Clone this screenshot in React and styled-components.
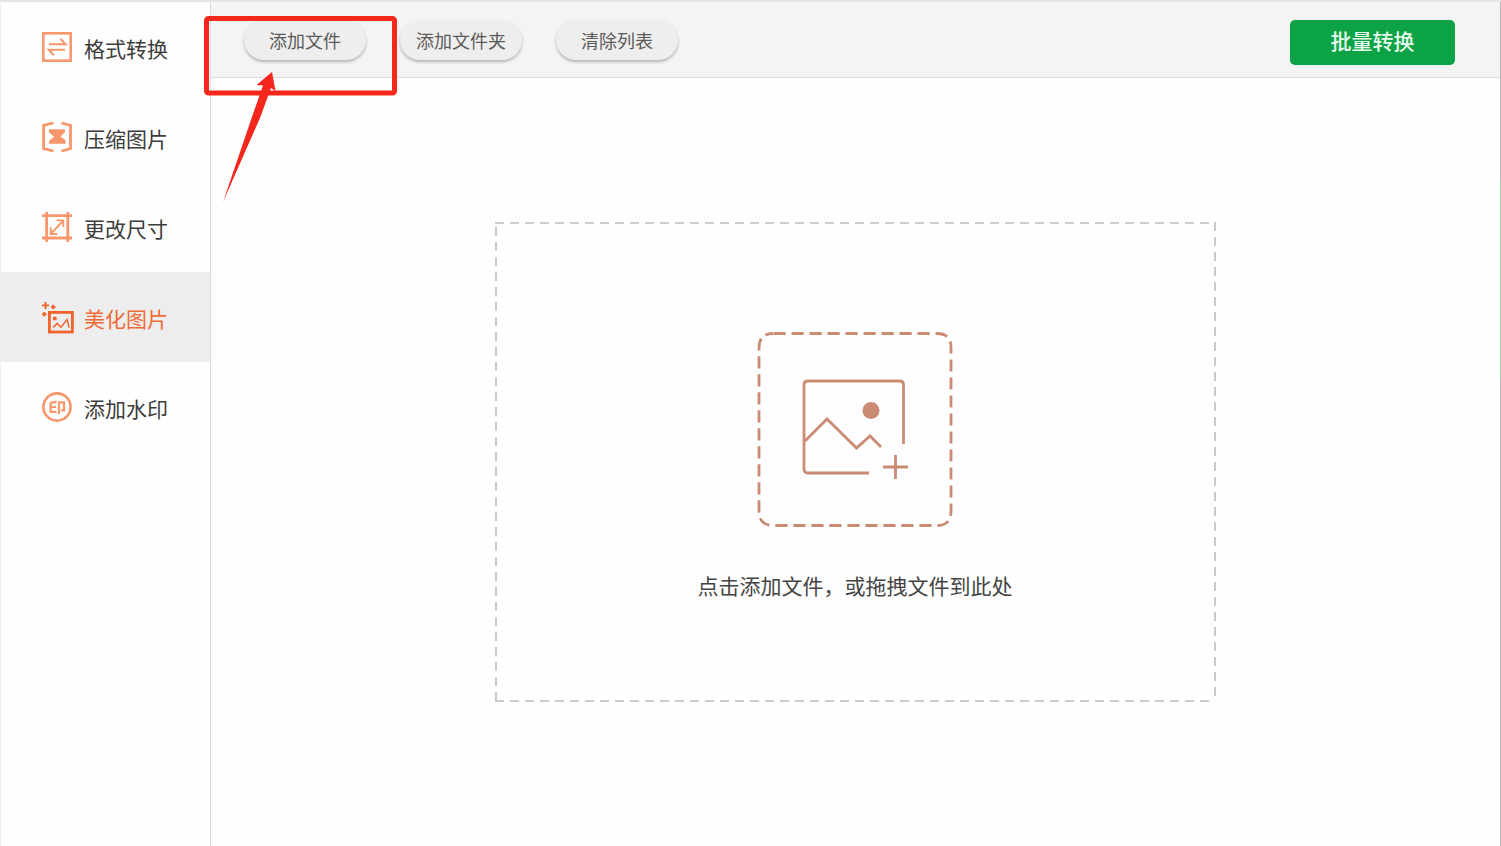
import React from "react";
import styled, { createGlobalStyle } from "styled-components";

const GlobalStyle = createGlobalStyle`
  *, *::before, *::after { box-sizing: border-box; }
  body {
    margin: 0;
    background: #fefefe;
    color: #3c3c3c;
    font-family: "Noto Sans CJK SC", sans-serif;
  }
  button { font-family: inherit; cursor: pointer; }
`;

const Window = styled.div`
  position: relative;
  display: flex;
  min-height: 100vh;
  border-top: 2px solid #e3e4e6;
  border-left: 1px solid #f0f0f2;
`;

const Sidebar = styled.nav`
  flex: 0 0 210px;
  display: flex;
  flex-direction: column;
  border-right: 1px solid #dcdcde;
`;

const NavItem = styled.a`
  display: flex;
  align-items: center;
  gap: 10px;
  height: 90px;
  padding-left: 40px;
  text-decoration: none;
  font-size: 21px;
  line-height: 30px;
  color: ${(p) => (p.$active ? "#f06a35" : "#3c3c3c")};
  background: ${(p) => (p.$active ? "#ededed" : "transparent")};
`;

const NavIcon = styled.svg`
  flex: none;
  width: 33px;
  height: 34px;
  fill: none;
  stroke: ${(p) => (p.$active ? "#f0632c" : "#f7976c")};
  color: ${(p) => (p.$active ? "#f0632c" : "#f7976c")};
`;

const NavLabel = styled.span`
  padding-top: 2px;
`;

const Main = styled.main`
  flex: 1;
  min-width: 0;
  display: flex;
  flex-direction: column;
`;

const Toolbar = styled.header`
  display: flex;
  align-items: flex-start;
  gap: 34px;
  height: 76px;
  padding: 18px 46px 0 33px;
  background: #f4f4f4;
  border-bottom: 1px solid #dcdcdc;
`;

const PillButton = styled.button`
  width: 122px;
  height: 40px;
  padding: 0;
  border: 0;
  border-radius: 20px;
  background: #eeeeee;
  box-shadow: 0 2px 3px rgba(0, 0, 0, 0.26);
  color: #5a5a5a;
  font-size: 18px;
  line-height: 38px;
  white-space: nowrap;
`;

const PrimaryButton = styled.button`
  width: 165px;
  height: 45px;
  margin-left: auto;
  padding: 0 0 6px;
  border: 0;
  border-radius: 5px;
  background: #0ba345;
  color: #e9fbef;
  font-size: 21px;
  font-weight: 500;
  line-height: 30px;
`;

const Workspace = styled.section`
  flex: 1;
  display: flex;
  align-items: center;
  justify-content: center;
  padding: 24px 26px 24px 24px;
`;

const DropZone = styled.button`
  position: relative;
  display: flex;
  flex-direction: column;
  align-items: center;
  justify-content: center;
  gap: 43px;
  width: 720px;
  max-width: 100%;
  height: 480px;
  padding: 6px 0 0;
  border: 0;
  background: transparent;
  color: #444444;
  font-size: 21px;
  line-height: 30px;
`;

const DashedFrame = styled.svg`
  position: absolute;
  inset: 0;
  width: 100%;
  height: 100%;
  overflow: visible;
`;

const PictureIcon = styled.svg`
  width: 196px;
  height: 196px;
`;

const Callout = styled.svg`
  position: absolute;
  top: 12px;
  left: 201px;
  width: 198px;
  height: 192px;
  pointer-events: none;
`;

const WindowEdge = styled.div`
  position: absolute;
  top: 0;
  right: 0;
  bottom: 0;
  width: 1px;
  background: linear-gradient(
    to bottom,
    #b8b8b8 0 178px,
    #a9d3a9 178px 378px,
    #b8b8b8 378px
  );
`;

const icons = {
  convert: (
    <>
      <rect x="2.3" y="3.3" width="27.4" height="27.4" strokeWidth="2.6" />
      <path d="M8 14.2H24.6L19.4 8.800" strokeWidth="2" />
      <path d="M24 19.8H7.600L12.800 25.200" strokeWidth="2" />
    </>
  ),
  compress: (
    <>
      <path
        d="M12.5 3L2.600 5.400V28.600L12.500 31M20.500 3L29.500 5.400V28.600L20.500 31"
        strokeWidth="2.8"
      />
      <path
        d="M8 9.3H24V12.2L19.500 16.500L24.500 20.200V23.800H8V21L13.200 16.500L8 12.500Z"
        fill="currentColor"
        stroke="none"
      />
    </>
  ),
  resize: (
    <>
      <path d="M1 5.6H31M1 28H31" strokeWidth="2.8" />
      <path d="M5.6 2V32M26.8 2V32" strokeWidth="2.8" />
      <path
        d="M10.2 23.4L21.8 11M15.5 10.4H22.3V17M9.7 17.5V24H16.3"
        strokeWidth="1.9"
      />
    </>
  ),
  beautify: (
    <>
      <path d="M1 5.4H8M4.5 2V9M10 7H14.5M12.2 4.7V9.3M1 14.3H5.5M3.3 12V16.6" strokeWidth="1.9" />
      <rect x="8.4" y="12.4" width="23" height="19.6" strokeWidth="2.8" />
      <circle cx="13.8" cy="18.5" r="2" fill="currentColor" stroke="none" />
      <path d="M12.2 27.4L16.3 23.4L20 27.2L26 19.6L28.2 27.6" strokeWidth="1.5" />
    </>
  ),
  watermark: (
    <>
      <circle cx="16" cy="17" r="13.6" strokeWidth="2.6" />
      <path
        d="M15.600 11.600L9.600 12.800V21.800H15.400M9.600 17H15M18 24V12.400H23V20.400H20"
        strokeWidth="2.2"
      />
    </>
  ),
};

const navItems = [
  { id: "convert", label: "格式转换" },
  { id: "compress", label: "压缩图片" },
  { id: "resize", label: "更改尺寸" },
  { id: "beautify", label: "美化图片", active: true },
  { id: "watermark", label: "添加水印" },
];

const actions = ["添加文件", "添加文件夹", "清除列表"];

export default function App() {
  return (
    <>
      <GlobalStyle />
      <Window>
        <Sidebar>
          {navItems.map(({ id, label, active }) => (
            <NavItem
              key={id}
              href={`#${id}`}
              $active={active}
              aria-current={active ? "page" : undefined}
            >
              <NavIcon viewBox="0 0 33 34" $active={active} aria-hidden="true">
                {icons[id]}
              </NavIcon>
              <NavLabel>{label}</NavLabel>
            </NavItem>
          ))}
        </Sidebar>
        <Main>
          <Toolbar>
            {actions.map((label) => (
              <PillButton key={label} type="button">
                {label}
              </PillButton>
            ))}
            <PrimaryButton type="button">批量转换</PrimaryButton>
          </Toolbar>
          <Workspace>
            <DropZone type="button">
              <DashedFrame aria-hidden="true">
                <g stroke="#bdbdbd" strokeWidth="1.6" strokeDasharray="9 6">
                  <line x1="0" y1="1" x2="100%" y2="1" />
                  <line x1="0" y1="479" x2="100%" y2="479" />
                  <line x1="1" y1="5" x2="1" y2="480" />
                  <line x1="100%" y1="0" x2="100%" y2="480" />
                </g>
              </DashedFrame>
              <PictureIcon
                viewBox="0 0 196 196"
                fill="none"
                stroke="#cb8a72"
                strokeWidth="2.8"
                aria-hidden="true"
              >
                <path
                  d="M16 2.5H180Q194 2.5 194 16.5V180Q194 194.5 180 194.5H16Q2 194.5 2 180V16.5Q2 2.5 16 2.5Z"
                  strokeDasharray="12.2 5.8"
                  strokeDashoffset="-0.5"
                />
                <path d="M146.500 113V54Q146.500 50 142.500 50H51Q47 50 47 54V138Q47 142 51 142H112" />
                <path d="M48 110L70 88L99.500 117L113 105L124 116" />
                <path d="M126 136H151M138.500 124V148" />
                <circle cx="114" cy="79.500" r="8.500" fill="#cb8a72" stroke="none" />
              </PictureIcon>
              <span>点击添加文件，或拖拽文件到此处</span>
            </DropZone>
          </Workspace>
        </Main>
        <Callout viewBox="0 0 198 192" aria-hidden="true">
          <rect
            x="4.500"
            y="4.500"
            width="188"
            height="74.500"
            rx="2"
            fill="none"
            stroke="#f5261c"
            strokeWidth="5"
          />
          <path
            d="M70 58L54.500 71L61 71.500L51 100L21 188L58 104L69 74L73.500 77Z"
            fill="#f5261c"
          />
        </Callout>
        <WindowEdge />
      </Window>
    </>
  );
}
